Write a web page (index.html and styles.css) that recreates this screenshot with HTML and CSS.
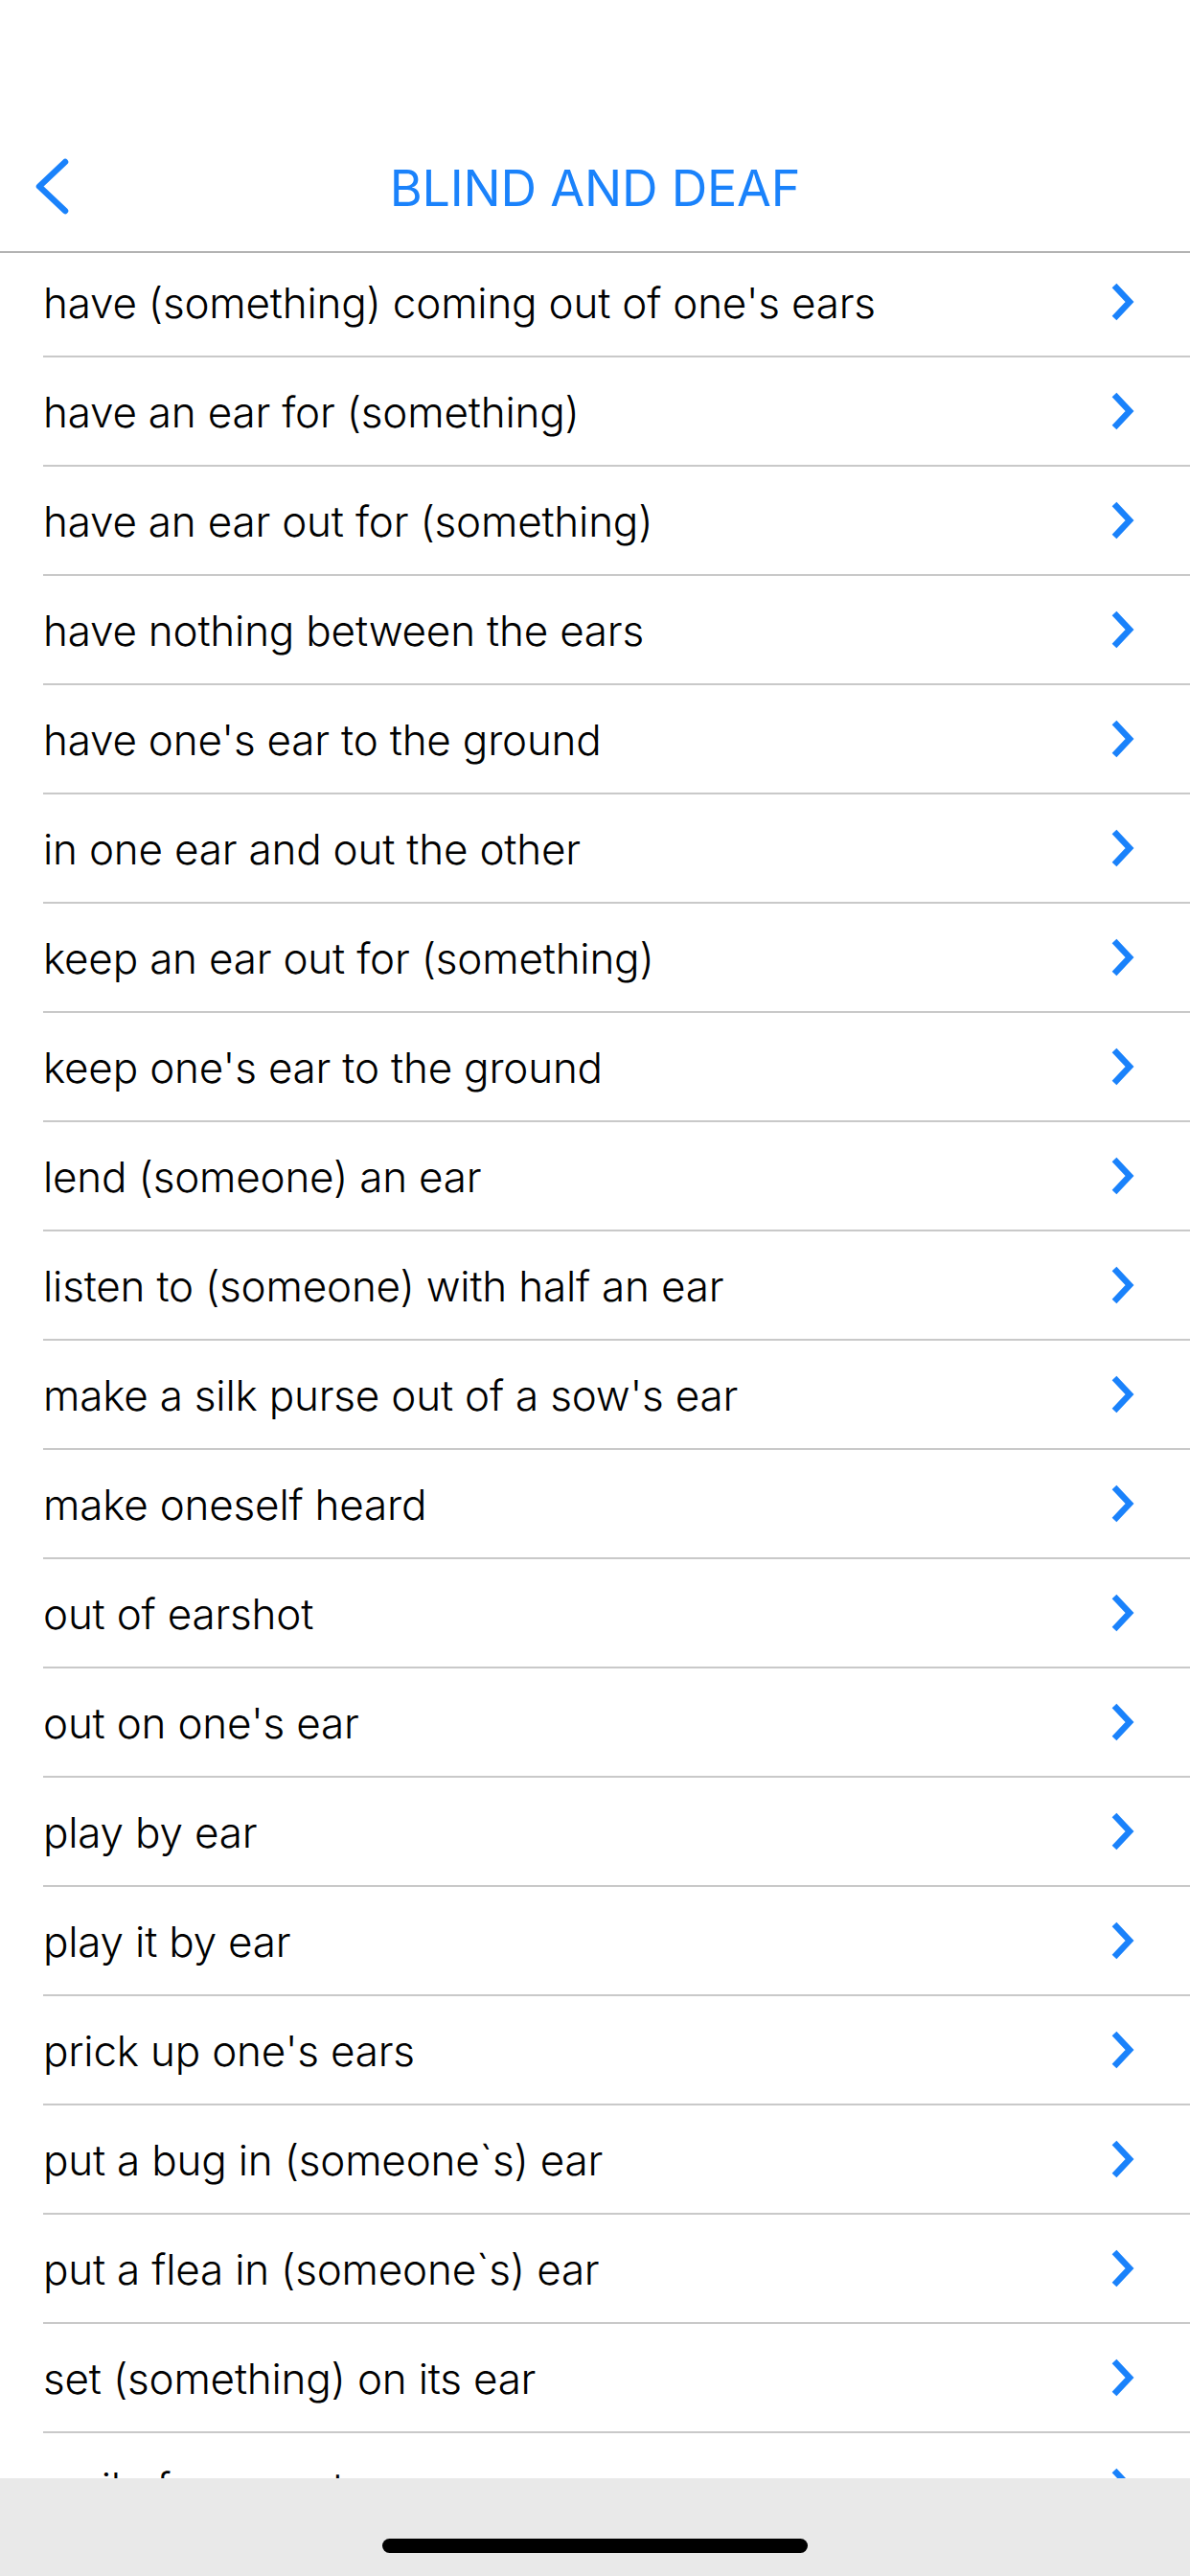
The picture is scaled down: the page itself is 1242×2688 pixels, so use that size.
FILE: index.html
```html
<!DOCTYPE html>
<html lang="en">
<head>
<meta charset="UTF-8" />
<meta name="viewport" content="width=device-width, initial-scale=1" />
<title>Blind and Deaf</title>
<link rel="stylesheet" href="styles.css">
</head>
<body>

  <div class="screen">
    <header class="nav">
      <a class="back" href="#" aria-label="Back">
        <svg width="40" height="64" viewBox="0 0 40 64">
          <polyline points="31,6 4,31.5 31,57" fill="none" stroke="#1a82fb" stroke-width="6.5" stroke-linecap="round" stroke-linejoin="round"/>
        </svg>
      </a>
      <h1 class="nav-title">BLIND AND DEAF</h1>
      <span></span>
    </header>

    <div class="list-wrap">
      <ul class="idiom-list">
        <li><span>have (something) coming out of one's ears</span><svg class="chev" width="24" height="40" viewBox="0 0 24 40"><polyline points="3,3 19,20 3,37" /></svg></li>
        <li><span>have an ear for (something)</span><svg class="chev" width="24" height="40" viewBox="0 0 24 40"><polyline points="3,3 19,20 3,37" /></svg></li>
        <li><span>have an ear out for (something)</span><svg class="chev" width="24" height="40" viewBox="0 0 24 40"><polyline points="3,3 19,20 3,37" /></svg></li>
        <li><span>have nothing between the ears</span><svg class="chev" width="24" height="40" viewBox="0 0 24 40"><polyline points="3,3 19,20 3,37" /></svg></li>
        <li><span>have one's ear to the ground</span><svg class="chev" width="24" height="40" viewBox="0 0 24 40"><polyline points="3,3 19,20 3,37" /></svg></li>
        <li><span>in one ear and out the other</span><svg class="chev" width="24" height="40" viewBox="0 0 24 40"><polyline points="3,3 19,20 3,37" /></svg></li>
        <li><span>keep an ear out for (something)</span><svg class="chev" width="24" height="40" viewBox="0 0 24 40"><polyline points="3,3 19,20 3,37" /></svg></li>
        <li><span>keep one's ear to the ground</span><svg class="chev" width="24" height="40" viewBox="0 0 24 40"><polyline points="3,3 19,20 3,37" /></svg></li>
        <li><span>lend (someone) an ear</span><svg class="chev" width="24" height="40" viewBox="0 0 24 40"><polyline points="3,3 19,20 3,37" /></svg></li>
        <li><span>listen to (someone) with half an ear</span><svg class="chev" width="24" height="40" viewBox="0 0 24 40"><polyline points="3,3 19,20 3,37" /></svg></li>
        <li><span>make a silk purse out of a sow's ear</span><svg class="chev" width="24" height="40" viewBox="0 0 24 40"><polyline points="3,3 19,20 3,37" /></svg></li>
        <li><span>make oneself heard</span><svg class="chev" width="24" height="40" viewBox="0 0 24 40"><polyline points="3,3 19,20 3,37" /></svg></li>
        <li><span>out of earshot</span><svg class="chev" width="24" height="40" viewBox="0 0 24 40"><polyline points="3,3 19,20 3,37" /></svg></li>
        <li><span>out on one's ear</span><svg class="chev" width="24" height="40" viewBox="0 0 24 40"><polyline points="3,3 19,20 3,37" /></svg></li>
        <li><span>play by ear</span><svg class="chev" width="24" height="40" viewBox="0 0 24 40"><polyline points="3,3 19,20 3,37" /></svg></li>
        <li><span>play it by ear</span><svg class="chev" width="24" height="40" viewBox="0 0 24 40"><polyline points="3,3 19,20 3,37" /></svg></li>
        <li><span>prick up one's ears</span><svg class="chev" width="24" height="40" viewBox="0 0 24 40"><polyline points="3,3 19,20 3,37" /></svg></li>
        <li><span>put a bug in (someone`s) ear</span><svg class="chev" width="24" height="40" viewBox="0 0 24 40"><polyline points="3,3 19,20 3,37" /></svg></li>
        <li><span>put a flea in (someone`s) ear</span><svg class="chev" width="24" height="40" viewBox="0 0 24 40"><polyline points="3,3 19,20 3,37" /></svg></li>
        <li><span>set (something) on its ear</span><svg class="chev" width="24" height="40" viewBox="0 0 24 40"><polyline points="3,3 19,20 3,37" /></svg></li>
        <li><span>smile from ear to ear</span><svg class="chev" width="24" height="40" viewBox="0 0 24 40"><polyline points="3,3 19,20 3,37" /></svg></li>
      </ul>
    </div>

    <div class="home-area">
      <div class="home-indicator"></div>
    </div>
  </div>

</body>
</html>
```

FILE: styles.css
```css
body {
  margin: 0;
  font-family: Inter, "Noto Sans", "Liberation Sans", sans-serif;
  background: white;
}
.screen {
  width: 1242px;
  height: 2688px;
  display: flex;
  flex-direction: column;
  overflow: hidden;
}
.nav {
  height: 264px;
  padding-top: 130px;
  box-sizing: border-box;
  border-bottom: 2px solid #b3b3b3;
  display: grid;
  grid-template-columns: 1fr auto 1fr;
  align-items: center;
  position: relative;
  z-index: 1;
  background: white;
}
.back {
  display: flex;
  padding-left: 37px;
  margin-top: -2px;
}
.nav-title {
  margin: 0;
  font-size: 52px;
  font-weight: 400;
  color: #1a82fb;
  letter-spacing: -0.2px;
}
.list-wrap {
  flex: 1;
  overflow: hidden;
}
.idiom-list {
  list-style: none;
  margin: -5px 0 0 45px;
  padding: 0;
}
.idiom-list li {
  height: 114px;
  box-sizing: border-box;
  border-bottom: 2px solid #c9c9c9;
  display: flex;
  align-items: center;
  justify-content: space-between;
  padding-right: 58px;
  font-size: 44px;
  font-weight: 300;
  color: #000;
  letter-spacing: -0.2px;
}
.idiom-list li span {
  margin-top: 1px;
}
.chev {
  flex: none;
}
.chev polyline {
  fill: none;
  stroke: #1a82fb;
  stroke-width: 6.5;
  stroke-linecap: butt;
  stroke-linejoin: miter;
}
.home-area {
  height: 102px;
  background: #e9e9e9;
  display: flex;
  justify-content: center;
  padding-top: 63px;
  box-sizing: border-box;
  flex: none;
}
.home-indicator {
  width: 444px;
  height: 15px;
  border-radius: 8px;
  background: #000;
}
```
